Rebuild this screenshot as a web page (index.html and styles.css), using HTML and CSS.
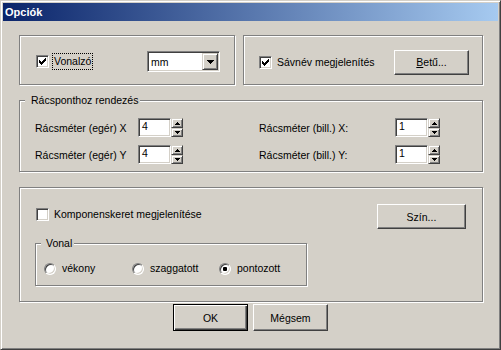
FILE: index.html
```html
<!DOCTYPE html>
<html lang="hu">

<head>
    <meta charset="UTF-8" />
    <title>Opciók</title>
    <meta name="viewport" content="width=device-width, initial-scale=1.0" />
    <link rel="stylesheet" href="styles.css">
</head>

<body>
    <div class="window">
        <div class="titlebar">Opciók</div>

        <div class="client">
            <div class="top-row">
                <!-- Ruler -->
                <div class="group g-ruler">
                    <div class="check">
                        <span class="box">
                            <svg width="7" height="7" viewBox="0 0 7 7" shape-rendering="crispEdges"><path d="M0 2h1v3H0z M1 3h1v3H1z M2 4h1v3H2z M3 3h1v3H3z M4 2h1v3H4z M5 1h1v3H5z M6 0h1v3H6z" fill="#000"/></svg>
                        </span>
                        <span class="check-text focus">Vonalzó</span>
                    </div>
                    <div class="combo">
                        <span class="combo-text">mm</span>
                        <span class="combo-btn">
                            <svg width="7" height="4" viewBox="0 0 7 4" shape-rendering="crispEdges"><path d="M0 0h7v1h-1v1h-1v1h-1v1h-1v-1h-1v-1h-1v-1h-1z" fill="#000"/></svg>
                        </span>
                    </div>
                </div>

                <!-- Band name -->
                <div class="group g-band">
                    <div class="check">
                        <span class="box">
                            <svg width="7" height="7" viewBox="0 0 7 7" shape-rendering="crispEdges"><path d="M0 2h1v3H0z M1 3h1v3H1z M2 4h1v3H2z M3 3h1v3H3z M4 2h1v3H4z M5 1h1v3H5z M6 0h1v3H6z" fill="#000"/></svg>
                        </span>
                        <span class="check-text">Sávnév megjelenítés</span>
                    </div>
                    <button type="button" class="btn btn-font"><u>B</u>etű...</button>
                </div>
            </div>

            <!-- Grid snapping -->
            <div class="group g-grid">
                <div class="legend">Rácsponthoz rendezés</div>
                <div class="spin-grid">
                    <span>Rácsméter (egér) X</span>
                    <div class="spin">
                        <span class="spin-edit">4</span>
                        <span class="spin-btns">
                            <span class="spin-up"><svg width="5" height="3" viewBox="0 0 5 3" shape-rendering="crispEdges"><path d="M2 0h1v1h1v1h1v1H0v-1h1v-1h1z" fill="#000"/></svg></span>
                            <span class="spin-down"><svg width="5" height="3" viewBox="0 0 5 3" shape-rendering="crispEdges"><path d="M0 0h5v1h-1v1h-1v1h-1v-1h-1v-1H0z" fill="#000"/></svg></span>
                        </span>
                    </div>
                    <span></span>
                    <span>Rácsméter (bill.) X:</span>
                    <div class="spin">
                        <span class="spin-edit">1</span>
                        <span class="spin-btns">
                            <span class="spin-up"><svg width="5" height="3" viewBox="0 0 5 3" shape-rendering="crispEdges"><path d="M2 0h1v1h1v1h1v1H0v-1h1v-1h1z" fill="#000"/></svg></span>
                            <span class="spin-down"><svg width="5" height="3" viewBox="0 0 5 3" shape-rendering="crispEdges"><path d="M0 0h5v1h-1v1h-1v1h-1v-1h-1v-1H0z" fill="#000"/></svg></span>
                        </span>
                    </div>

                    <span>Rácsméter (egér) Y</span>
                    <div class="spin">
                        <span class="spin-edit">4</span>
                        <span class="spin-btns">
                            <span class="spin-up"><svg width="5" height="3" viewBox="0 0 5 3" shape-rendering="crispEdges"><path d="M2 0h1v1h1v1h1v1H0v-1h1v-1h1z" fill="#000"/></svg></span>
                            <span class="spin-down"><svg width="5" height="3" viewBox="0 0 5 3" shape-rendering="crispEdges"><path d="M0 0h5v1h-1v1h-1v1h-1v-1h-1v-1H0z" fill="#000"/></svg></span>
                        </span>
                    </div>
                    <span></span>
                    <span>Rácsméter (bill.) Y:</span>
                    <div class="spin">
                        <span class="spin-edit">1</span>
                        <span class="spin-btns">
                            <span class="spin-up"><svg width="5" height="3" viewBox="0 0 5 3" shape-rendering="crispEdges"><path d="M2 0h1v1h1v1h1v1H0v-1h1v-1h1z" fill="#000"/></svg></span>
                            <span class="spin-down"><svg width="5" height="3" viewBox="0 0 5 3" shape-rendering="crispEdges"><path d="M0 0h5v1h-1v1h-1v1h-1v-1h-1v-1H0z" fill="#000"/></svg></span>
                        </span>
                    </div>
                </div>
            </div>

            <!-- Component frame -->
            <div class="group g-frame">
                <div class="frame-row">
                    <div class="check frame-check">
                        <span class="box"></span>
                        <span class="check-text">Komponenskeret megjelenítése</span>
                    </div>
                    <button type="button" class="btn btn-color">Szín...</button>
                </div>

                <div class="group g-line">
                    <div class="legend legend-line">Vonal</div>
                    <div class="radios">
                        <div class="radio-item"><span class="radio"></span><span class="radio-text">vékony</span></div>
                        <div class="radio-item"><span class="radio"></span><span class="radio-text">szaggatott</span></div>
                        <div class="radio-item"><span class="radio selected"></span><span class="radio-text">pontozott</span></div>
                    </div>
                </div>
            </div>

            <div class="actions">
                <button type="button" class="btn btn-default">OK</button>
                <button type="button" class="btn">Mégsem</button>
            </div>
        </div>
    </div>
</body>

</html>
```

FILE: styles.css
```css
* {
    box-sizing: border-box;
}

body {
    margin: 0;
    background: #d4d0c8;
    font-family: "Liberation Sans", Arial, sans-serif;
    font-size: 10.5px;
    color: #000;
}

.window {
    width: 501px;
    height: 350px;
    padding: 2px;
    display: flex;
    flex-direction: column;
    background: #d4d0c8;
    border: 1px solid;
    border-color: #d4d0c8 #404040 #404040 #d4d0c8;
    box-shadow: inset 1px 1px #fff, inset -1px -1px #808080;
}

.titlebar {
    height: 18px;
    flex: none;
    display: flex;
    align-items: center;
    padding-left: 2px;
    background: linear-gradient(to right, #0a246a, #a6caf0);
    color: #fff;
    font-size: 11px;
    font-weight: bold;
}

.client {
    flex: 1;
    padding: 14px 15px 0 16px;
}

.top-row {
    display: flex;
    gap: 8px;
}

/* etched group frame */
.group {
    border: 1px solid #808080;
    box-shadow: inset 1px 1px #fff, 1px 1px #fff;
}

.legend {
    width: fit-content;
    margin: -7px 0 0 5px;
    padding: 0 2px 0 6px;
    line-height: 13px;
    background: #d4d0c8;
}

.g-ruler {
    width: 216px;
    height: 50px;
    display: flex;
    align-items: center;
    padding: 3px 14px 0 16px;
}

.g-band {
    width: 240px;
    height: 50px;
    display: flex;
    align-items: center;
    padding: 4px 13px 0 15px;
}

/* checkbox */
.check {
    display: flex;
    align-items: center;
}

.box {
    width: 13px;
    height: 13px;
    display: flex;
    align-items: center;
    justify-content: center;
    background: #fff;
    border: 1px solid;
    border-color: #808080 #fff #fff #808080;
    box-shadow: inset 1px 1px #404040, inset -1px -1px #d4d0c8;
}

.box svg {
    display: block;
}

.check-text {
    margin-left: 3px;
    padding: 1px;
    line-height: 13px;
    border: 1px solid transparent;
    white-space: nowrap;
}

.check-text.focus {
    border: 1px dotted #000;
}

/* combo box */
.combo {
    margin-left: auto;
    width: 73px;
    height: 21px;
    display: flex;
    align-items: center;
    padding: 1px;
    background: #fff;
    border: 1px solid;
    border-color: #808080 #fff #fff #808080;
    box-shadow: inset 1px 1px #404040, inset -1px -1px #d4d0c8;
}

.combo-text {
    flex: 1;
    padding-left: 2px;
}

.combo-btn,
.spin-up,
.spin-down {
    display: flex;
    align-items: center;
    justify-content: center;
    background: #d4d0c8;
    border: 1px solid;
    border-color: #d4d0c8 #404040 #404040 #d4d0c8;
    box-shadow: inset 1px 1px #fff, inset -1px -1px #808080;
}

.combo-btn {
    width: 16px;
    height: 17px;
}

.combo-btn svg,
.spin svg {
    display: block;
}

/* push buttons */
.btn {
    font: inherit;
    color: #000;
    padding: 0;
    background: #d4d0c8;
    border: 1px solid;
    border-color: #fff #404040 #404040 #fff;
    box-shadow: inset -1px -1px #808080;
    width: 75px;
    height: 25px;
    cursor: pointer;
}

.btn-font {
    margin-left: auto;
}

.btn u {
    text-decoration-thickness: 1px;
    text-underline-offset: 1px;
}

/* grid snapping */
.g-grid {
    margin-top: 15px;
    height: 72px;
}

.spin-grid {
    display: grid;
    grid-template-columns: 103px 45px 76px 136px 45px;
    grid-template-rows: 19px 19px;
    row-gap: 8px;
    align-items: center;
    margin: 11px 0 0 15px;
    white-space: nowrap;
}

.spin {
    display: flex;
    height: 19px;
}

.spin-edit {
    width: 33px;
    height: 19px;
    padding-left: 3px;
    line-height: 15px;
    background: #fff;
    border: 1px solid;
    border-color: #808080 #fff #fff #808080;
    box-shadow: inset 1px 1px #404040, inset -1px -1px #d4d0c8;
}

.spin-btns {
    width: 12px;
    display: flex;
    flex-direction: column;
}

.spin-up {
    height: 10px;
}

.spin-down {
    height: 9px;
}

/* component frame */
.g-frame {
    margin-top: 15px;
    height: 115px;
    padding-right: 16px;
}

.frame-row {
    display: flex;
    align-items: flex-start;
    padding-top: 16px;
}

.frame-check {
    margin: 2px 0 0 16px;
}

.btn-color {
    margin-left: auto;
    width: 89px;
}

.g-line {
    width: 272px;
    height: 43px;
    margin: 14px 0 0 15px;
}

.legend-line {
    padding: 0 2px 0 5px;
}

.radios {
    display: grid;
    grid-template-columns: 88px 87px auto;
    margin: 12px 0 0 8px;
}

.radio-item {
    display: flex;
    align-items: center;
    line-height: 13px;
}

.radio {
    width: 12px;
    height: 12px;
    display: flex;
    align-items: center;
    justify-content: center;
    border-radius: 50%;
    background: #fff;
    border: 1px solid;
    border-color: #808080 #fff #fff #808080;
    box-shadow: inset 1px 1px #404040, inset -1px -1px #d4d0c8;
}

.radio.selected::after {
    content: "";
    width: 4px;
    height: 4px;
    border-radius: 1px;
    background: #000;
}

.radio-text {
    margin-left: 6px;
}

/* dialog buttons */
.actions {
    display: flex;
    gap: 5px;
    margin-top: 2px;
    padding-left: 154px;
}

.actions .btn {
    height: 27px;
}

.btn-default {
    border: 1px solid #000;
    box-shadow: inset 1px 1px #fff, inset -1px -1px #404040, inset -2px -2px #808080;
}
```
